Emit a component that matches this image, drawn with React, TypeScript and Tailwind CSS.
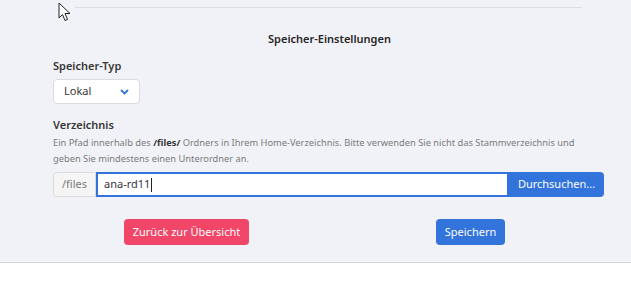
import React from "react";

export default function App() {
  return (
    <div className="w-[631px] h-[296px] bg-white" style={{ fontFamily: '"Noto Sans", "Open Sans", sans-serif' }}>
      <div className="relative h-[263px] bg-[#f1f2f7] border-b border-[#d6d6d9]">
        <svg className="absolute left-[58px] top-[2px]" width="14" height="20" viewBox="0 0 14 20">
          <path d="M1 1 L1 16 L4.5 12.5 L7 18.5 L9.5 17.5 L7 11.5 L12 11.5 Z" fill="#fff" stroke="#222" strokeWidth="1" strokeLinejoin="round" />
        </svg>
        <div className="pt-[7px] pl-[75px] pr-[49px]">
          <div className="h-px bg-[#dcdde2]" />
        </div>
        <div className="pl-[53px] pr-[27px]">
          <div className="mt-[24px] text-center text-[11px] font-semibold text-[#262626] leading-[14px] pl-[2px]">Speicher-Einstellungen</div>
          <div className="mt-[13px] text-[11px] font-semibold text-[#363636] leading-[14px]">Speicher-Typ</div>
          <div className="mt-[6px] w-[87px] h-[25px] bg-white border border-[#dbdbdb] rounded-[4px] flex items-center justify-between pl-[10px] pr-[10px]">
            <span className="text-[11px] text-[#363636]">Lokal</span>
            <svg width="9" height="6" viewBox="0 0 9 6">
              <path d="M1 1 L4.5 4.5 L8 1" fill="none" stroke="#3273dc" strokeWidth="1.8" />
            </svg>
          </div>
          <div className="mt-[14px] text-[11px] font-semibold text-[#363636] leading-[14px]">Verzeichnis</div>
          <div className="mt-[3px] max-w-[540px] text-[9.3px] leading-[16px] text-[#7a7a7a]">
            Ein Pfad innerhalb des <b className="font-bold text-[#363636]">/files/</b> Ordners in Ihrem Home-Verzeichnis. Bitte verwenden Sie nicht das Stammverzeichnis und geben Sie mindestens einen Unterordner an.
          </div>
          <div className="mt-[5px] flex h-[25px]">
            <div className="w-[43px] flex items-center justify-center bg-[#f5f5f5] border border-[#dbdbdb] rounded-l-[4px] text-[11px] text-[#7a7a7a]">/files</div>
            <div className="flex-1 flex items-center bg-white border-2 border-[#3273dc] pl-[6px] text-[11px] text-[#363636]">
              ana-rd11<span className="inline-block w-px h-[14px] bg-[#222] ml-px" />
            </div>
            <div className="w-[95px] flex items-center justify-center bg-[#3273dc] rounded-r-[4px] text-[11px] text-white">Durchsuchen...</div>
          </div>
          <div className="mt-[22px] flex">
            <div className="ml-[71px] w-[125px] h-[26px] flex items-center justify-center bg-[#f14668] rounded-[4px] text-[11px] text-white">Zurück zur Übersicht</div>
            <div className="ml-[187px] w-[69px] h-[26px] flex items-center justify-center bg-[#3273dc] rounded-[4px] text-[11px] text-white">Speichern</div>
          </div>
        </div>
      </div>
    </div>
  );
}
